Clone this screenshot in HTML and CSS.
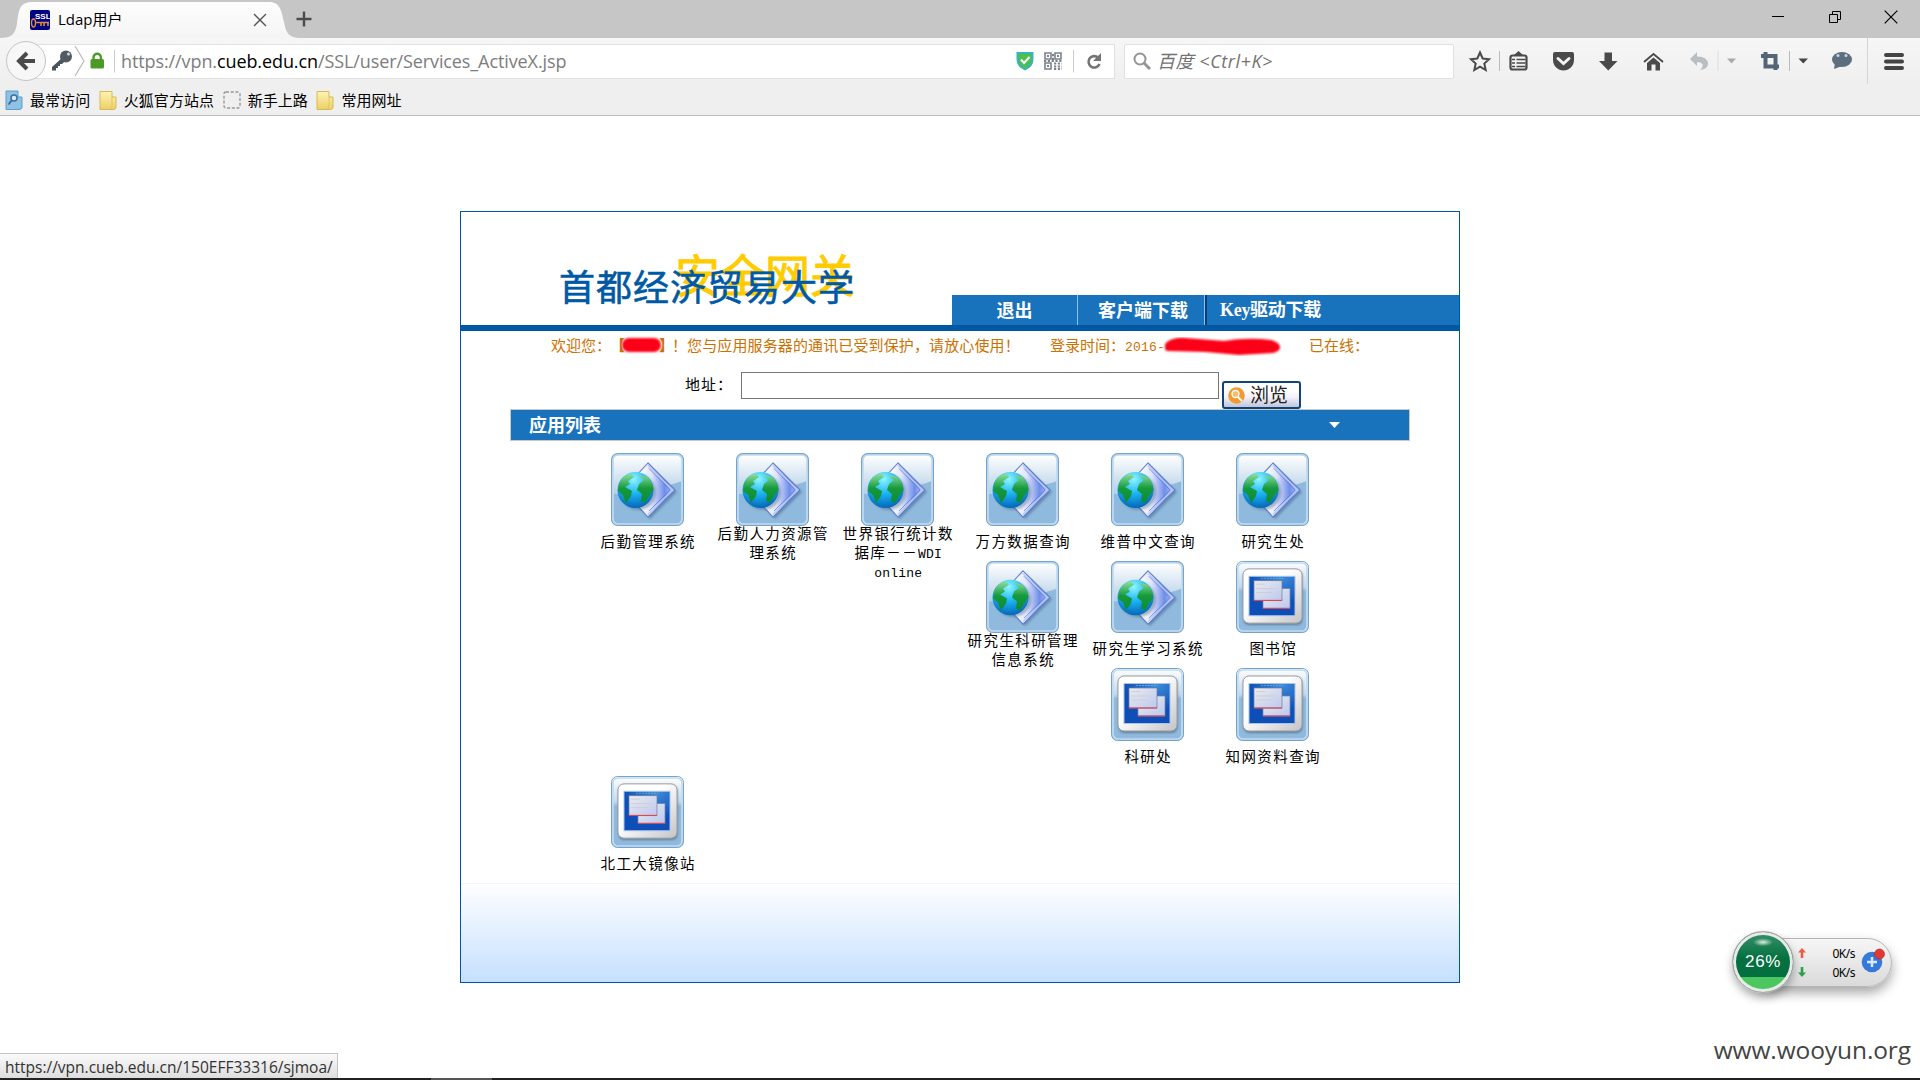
FILE: index.html
```html
<!DOCTYPE html>
<html lang="zh-CN">
<head>
<meta charset="utf-8">
<title>Ldap用户</title>
<link rel="stylesheet" href="styles.css">
</head>
<body>
<svg class="defs" width="0" height="0">
  <defs>
    <linearGradient id="tile" x1="0" y1="0" x2="0" y2="1"><stop offset="0" stop-color="#fff"/><stop offset=".36" stop-color="#c3d9ec"/><stop offset=".42" stop-color="#8fb9dd"/><stop offset="1" stop-color="#8fb9dd"/></linearGradient>
    <linearGradient id="gloss" x1="0" y1="0" x2="0" y2="1"><stop offset="0" stop-color="#fff"/><stop offset="1" stop-color="#b4cfe6"/></linearGradient>
    <radialGradient id="globe" cx=".45" cy=".2" r=".8"><stop offset="0" stop-color="#8ff6ff"/><stop offset=".5" stop-color="#1cb4f4"/><stop offset="1" stop-color="#0467b8"/></radialGradient>
    <linearGradient id="land" x1="0" y1="0" x2="0" y2="1"><stop offset="0" stop-color="#8fe0a0"/><stop offset=".5" stop-color="#169a3c"/><stop offset="1" stop-color="#0b8a35"/></linearGradient>
    <linearGradient id="dia" x1="0" y1="0" x2="1" y2="0"><stop offset=".3" stop-color="#fff"/><stop offset=".55" stop-color="#dfe5fb"/><stop offset=".8" stop-color="#6f8ee8"/><stop offset="1" stop-color="#c3d0fa"/></linearGradient>
    <linearGradient id="frame" x1="0" y1="0" x2="1" y2="1"><stop offset=".4" stop-color="#fff"/><stop offset="1" stop-color="#c4c4c8"/></linearGradient>
    <radialGradient id="screen" cx=".7" cy="0" r="1"><stop offset="0" stop-color="#3f8fdc"/><stop offset=".7" stop-color="#0d4fb6"/></radialGradient>
    <linearGradient id="win" x1="0" y1="0" x2="1" y2="1"><stop offset="0" stop-color="#ebebf0"/><stop offset="1" stop-color="#bcc8ee"/></linearGradient>
    <linearGradient id="folder" x1="0" y1="0" x2="0" y2="1"><stop offset="0" stop-color="#fdf3b4"/><stop offset="1" stop-color="#ecd066"/></linearGradient>
    <filter id="soft" x="-10%" y="-30%" width="120%" height="160%"><feGaussianBlur stdDeviation="1"/></filter>
    <symbol id="web" viewBox="0 0 73 73" preserveAspectRatio="none">
      <rect x=".5" y=".5" width="72" height="72" rx="6" fill="#8fb9dd" stroke="#73a3cb"/>
      <path d="M2 41C24 42 55 34 71 28V8q0-6-6-6H8Q2 2 2 8Z" fill="url(#gloss)"/>
      <rect x="2" y="2" width="69" height="69" rx="5" fill="none" stroke="#c3dbef" stroke-width="1.7"/>
      <path d="M39 13L66 39 39 66 14 40Z" fill="#41608a" opacity=".5" filter="url(#soft)"/>
      <path d="M37 10L64 37 37 64 12 37Z" fill="url(#dia)" stroke="#5f80c8" stroke-width="1.1"/>
      <path d="M37 12.500L61.500 37 37 61.500" fill="none" stroke="#b9c8fb" stroke-width="1.300"/>
      <path d="M38 15.500L59 37 38 58" fill="none" stroke="#5f7edb" stroke-width=".8"/>
      <circle cx="27" cy="39" r="18" fill="#405a7c" opacity=".4" filter="url(#soft)"/>
      <circle cx="24.500" cy="37" r="18" fill="url(#globe)"/>
      <path d="M8 31Q11 22 20 20.500L23 24 17 28 19 31 14 34 21 38 20 43 15 50 12 42 7 38ZM27 22L37 24Q42 30 42.500 37L38 43 34 50 30 48 31 41 26 37 28 31 33 27Z" fill="url(#land)"/>
    </symbol>
    <symbol id="app" viewBox="0 0 73 73" preserveAspectRatio="none">
      <rect x=".5" y=".5" width="72" height="72" rx="6" fill="url(#tile)" stroke="#73a3cb"/>
      <rect x="2" y="2" width="69" height="69" rx="5" fill="none" stroke="#c3dbef" stroke-width="1.7"/>
      <rect x="7.500" y="9" width="59" height="56" rx="6" fill="#51687d" opacity=".7" filter="url(#soft)"/>
      <rect x="7" y="8" width="59" height="55" rx="6" fill="url(#frame)" stroke="#9b9da1"/>
      <rect x="13" y="15.500" width="46" height="40" fill="url(#screen)" stroke="#a9c3ea"/>
      <path d="M25 17.500h22" stroke="#7bbbe0" stroke-dasharray="2 1" opacity=".6"/>
      <rect x="27" y="28" width="27" height="20" fill="url(#win)" stroke="#7484b4" stroke-width=".7"/>
      <path d="M27 48h27" stroke="#d04a5c" stroke-width="1.200"/>
      <rect x="18" y="20" width="28" height="20" fill="url(#win)" stroke="#6f7c9c" stroke-width=".7"/>
      <path d="M20 23.500h9M20 28h20M20 32h17" stroke="#cfcfd3"/>
      <path d="M18 40h28" stroke="#d84a55" stroke-width="1.200"/>
    </symbol>
    <symbol id="fold" viewBox="0 0 18 20"><path d="M1 1.500h12v5.500h4v11q-1 1.500-3 1.500H1Z" fill="url(#folder)" stroke="#d8b953"/><path d="M13 7v9q0 3-3 3" fill="none" stroke="#e2c663"/></symbol>
  </defs>
</svg>

<header class="tabstrip">
  <div class="tab">
    <svg class="tab-shape" width="300" height="36" viewBox="0 0 300 36"><defs><linearGradient id="tg" x1="0" y1="0" x2="0" y2="1"><stop offset="0" stop-color="#fdfdfd"/><stop offset="1" stop-color="#f5f5f5"/></linearGradient></defs><path d="M0 36C12 36 15 32 17 22C19 6 20 0 33 0H268C280 0 281 7 284 20C286 31 289 36 300 36Z" fill="url(#tg)"/></svg>
    <svg class="favicon" width="20" height="20" viewBox="0 0 20 20"><rect width="20" height="20" rx="2" fill="#010080"/><text x="5" y="9" class="ssl">SSL</text><ellipse cx="3.500" cy="13" rx="2" ry="4" fill="none" stroke="#d98c3c" stroke-width="1.4"/><path d="M5 12.500H19M11 13v3M14 13v3M18 13v3" stroke="#d98c3c" stroke-width="1.600"/></svg>
    <span class="tab-title">Ldap用户</span>
    <svg class="tab-close" width="14" height="14" viewBox="0 0 14 14"><path d="M1 1L13 13M13 1L1 13" stroke="#555" stroke-width="1.400"/></svg>
  </div>
  <svg class="plus" width="16" height="16" viewBox="0 0 16 16"><path d="M8 0.500V15.500M.5 8H15.500" stroke="#4c4c4c" stroke-width="2.400"/></svg>
  <div class="winbtns">
    <svg width="12" height="12"><path d="M0 5.500H12" stroke="#000"/></svg>
    <svg width="12" height="12"><path d="M.5 3.500H8.500V11.500H.5ZM3.500 3.500V.5H11.500V8.500H8.500" fill="none" stroke="#000"/></svg>
    <svg width="14" height="14"><path d="M.7 .7L13.300 13.300M13.300 .7L.7 13.300" stroke="#000" stroke-width="1.200"/></svg>
  </div>
</header>

<nav class="toolbar">
  <div class="urlbar">
    <svg class="url-left" width="112" height="40" viewBox="0 0 112 40">
      <circle cx="20" cy="20" r="19.500" fill="#f7f7f7" stroke="#c4c4c4"/>
      <path d="M29 20H14M21 12L13 20L21 28" fill="none" stroke="#4a4a4a" stroke-width="4"/>
      <path d="M46 29.500V26L56 17L59 20L56 23H54V25H52V27H50V29.500Z" fill="#4b545c"/><circle cx="60" cy="15.500" r="6" fill="#515b64"/><circle cx="62.500" cy="13" r="1.500" fill="#d6dade"/>
      <path d="M69 5L78 20L69 35" fill="none" stroke="#b9b9b9" stroke-width="1.200"/>
      <path d="M87.500 19V16.500a3.700 3.700 0 0 1 7.400 0V19" fill="none" stroke="#4a9a25" stroke-width="2.400"/><rect x="84.500" y="18" width="13.500" height="9.500" rx="1.500" fill="#4a9a25"/>
      <path d="M108.500 9V31.500" stroke="#ccc"/>
    </svg>
    <span class="url">https://vpn.<b>cueb.edu.cn</b>/SSL/user/Services_ActiveX.jsp</span>
    <svg class="url-right" width="92" height="24" viewBox="0 0 92 24">
      <path d="M.5 3H17.500V10Q17.500 18 9 21.500Q.5 18 .5 10Z" fill="#3bb4b5"/><path d="M2.500 5H15.500V10Q15 16 9 19Q3 16 2.500 10Z" fill="#4cc04d"/><path d="M5 10.500L8 14L13.500 8" fill="none" stroke="#fff" stroke-width="2"/>
      <g fill="none" stroke="#7b828d" stroke-width="1.600"><path d="M29 4h6v6h-6zM39 4h6v6h-6zM29 14h6v6h-6z"/><path d="M32 6v2M42 6v2M32 16v2" stroke-width="2"/><path d="M37 5v8M28 12h18M38 14.500h8M38 17.500h8M38 20h8" stroke-dasharray="2.200 1.600" stroke-width="2"/></g>
      <path d="M57.500 0.500V23.500" stroke="#ccc"/>
      <path d="M82 8.500A5.700 5.700 0 1 0 83.500 15" fill="none" stroke="#747474" stroke-width="2.600"/><path d="M85 4V12H77Z" fill="#747474"/>
    </svg>
  </div>
  <div class="search">
    <svg width="18" height="18" viewBox="0 0 18 18"><circle cx="7" cy="7" r="5.500" fill="none" stroke="#949494" stroke-width="2"/><path d="M11 11L17 17" stroke="#949494" stroke-width="3"/></svg>
    <span>百度 &lt;Ctrl+K&gt;</span>
  </div>
  <svg class="tools" width="454" height="46" viewBox="1466 38 454 46">
    <path d="M1480 52.500L1482.700 58.500L1489 59.200L1484.300 63.500L1485.700 70L1480 66.700L1474.300 70L1475.700 63.500L1471 59.200L1477.300 58.500Z" fill="none" stroke="#4a4a4a" stroke-width="2"/>
    <path d="M1499.500 51V71M1789.500 51V71" stroke="#bbb"/><path d="M1718 51V71" stroke="#ddd"/>
    <rect x="1510.500" y="55.500" width="16" height="14" rx="2" fill="none" stroke="#4a4a4a" stroke-width="2.200"/><path d="M1514 55L1518.500 51L1523 55Z" fill="#4a4a4a"/><path d="M1512 59.500h3m1.500 0h9M1512 63h3m1.500 0h9M1512 66.500h3m1.500 0h9" stroke="#4a4a4a" stroke-width="1.500"/>
    <path d="M1555 52H1572Q1574 52 1574 54V60C1574 66 1569 70.500 1563.500 70.500S1553 66 1553 60V54Q1553 52 1555 52Z" fill="#4a4a4a"/><path d="M1558 58.500L1563.500 63.500L1569 58.500" fill="none" stroke="#f4f4f4" stroke-width="3" stroke-linecap="round"/>
    <path d="M1604.500 52.500H1612V61H1617.500L1608.300 70.500L1599 61H1604.500Z" fill="#4a4a4a"/>
    <path d="M1644 62L1653.500 54L1663 62" fill="none" stroke="#4a4a4a" stroke-width="1.800"/><path d="M1647 63L1653.500 57.500L1660 63V70.500H1655.500V64.500H1651.500V70.500H1647Z" fill="#4a4a4a"/>
    <path d="M1690 59L1697 52V56.500Q1708 56.500 1708 64Q1708 69 1700 70Q1703.500 67 1702.500 64Q1701 62 1697 62V66Z" fill="#b9bec3"/>
    <path d="M1727 58.500H1736L1731.500 63.500Z" fill="#aaa"/><path d="M1798.500 58.500H1808L1803.300 63.500Z" fill="#444"/>
    <path d="M1761 56H1775.500V70M1765.500 52V66.500H1779" fill="none" stroke="#536476" stroke-width="4"/>
    <ellipse cx="1842" cy="59.500" rx="10" ry="7.500" fill="#5d6f7f"/><path d="M1835 63L1834 69L1842 66Z" fill="#5d6f7f"/><circle cx="1838" cy="55.500" r="1.500" fill="#ccd5dc"/><circle cx="1846" cy="55.500" r="1.500" fill="#ccd5dc"/>
    <path d="M1867.500 38V84" stroke="#d5d5d5"/>
    <path d="M1886 55H1902M1886 61.500H1902M1886 68H1902" stroke="#444" stroke-width="4" stroke-linecap="round"/>
  </svg>
</nav>
<div class="bookmarks">
  <span class="bm"><svg width="18" height="20" viewBox="0 0 18 20"><path d="M1 1h12v6h4v11q-1 1.500-3 1.500H1Z" fill="#8fc1e3" stroke="#5c9fcb"/><circle cx="9" cy="8" r="3" fill="#d6ebf8" stroke="#3a6f9c" stroke-width="1.500"/><path d="M7 10L3.500 14.500" stroke="#3a6f9c" stroke-width="2"/></svg><span>最常访问</span></span>
  <span class="bm"><svg width="18" height="20"><use href="#fold"/></svg><span>火狐官方站点</span></span>
  <span class="bm"><svg width="18" height="20"><rect x="1" y="2" width="16" height="16" rx="2" fill="none" stroke="#999" stroke-width="1.400" stroke-dasharray="3 1.700"/></svg><span>新手上路</span></span>
  <span class="bm"><svg width="18" height="20"><use href="#fold"/></svg><span>常用网址</span></span>
</div>

<main class="page">
  <section class="panel">
    <div class="banner">
      <div class="logo"><span class="gateway">安全网关</span><span class="school">首都经济贸易大学</span></div>
      <div class="menu"><a class="m1">退出</a><a class="m2">客户端下载</a><a class="m3">Key驱动下载</a></div>
    </div>
    <div class="welcome">
      <span class="hello">欢迎您：</span>
      <span class="user"><b>【</b><b>】</b><svg class="mark" width="46" height="20"><rect x="4" y="3" width="39" height="14" rx="7" fill="#fb0015" filter="url(#soft)"/></svg></span>
      <span class="safe">！您与应用服务器的通讯已受到保护，请放心使用！</span>
      <span class="login">登录时间：<i>2016-</i><svg class="mark mark-date" width="130" height="24"><path d="M12 11Q18 6 30 7L68 10Q92 6 115 9Q126 13 117 16L83 18 50 15 12 14Z" fill="#fb0015" stroke="#fb0015" stroke-width="6" stroke-linejoin="round" filter="url(#soft)"/></svg></span>
      <span class="online">已在线：</span>
    </div>
    <form class="address">
      <label for="addr">地址：</label>
      <input id="addr" type="text">
      <button type="button"><svg width="17" height="17" viewBox="0 0 17 17"><circle cx="8.500" cy="8.500" r="8.300" fill="#f29a2e"/><circle cx="7.500" cy="7" r="3.500" fill="#f7bb70" stroke="#fff" stroke-width="1.300"/><path d="M10 10L14 14" stroke="#fff" stroke-width="2"/></svg><span>浏览</span></button>
    </form>
    <div class="list-head"><span>应用列表</span><svg width="11" height="6"><path d="M0 0H11L5.500 6Z" fill="#fff"/></svg></div>
    <div class="apps">
      <a class="app c1 r1"><svg><use href="#web"/></svg><span>后勤管理系统</span></a>
      <a class="app c2 r1 long"><svg><use href="#web"/></svg><span>后勤人力资源管<br>理系统</span></a>
      <a class="app c3 r1 long"><svg><use href="#web"/></svg><span>世界银行统计数<br>据库－－<i>WDI</i><br><i>online</i></span></a>
      <a class="app c4 r1"><svg><use href="#web"/></svg><span>万方数据查询</span></a>
      <a class="app c5 r1"><svg><use href="#web"/></svg><span>维普中文查询</span></a>
      <a class="app c6 r1"><svg><use href="#web"/></svg><span>研究生处</span></a>
      <a class="app c4 r2 long"><svg><use href="#web"/></svg><span>研究生科研管理<br>信息系统</span></a>
      <a class="app c5 r2"><svg><use href="#web"/></svg><span>研究生学习系统</span></a>
      <a class="app c6 r2"><svg><use href="#app"/></svg><span>图书馆</span></a>
      <a class="app c5 r3"><svg><use href="#app"/></svg><span>科研处</span></a>
      <a class="app c6 r3"><svg><use href="#app"/></svg><span>知网资料查询</span></a>
      <a class="app c1 r4"><svg><use href="#app"/></svg><span>北工大镜像站</span></a>
    </div>
    <div class="fade"></div>
  </section>
</main>

<div class="status">https://vpn.cueb.edu.cn/150EFF33316/sjmoa/</div>
<aside class="meter">
  <div class="ball"><span>26%</span></div>
  <div class="speeds">
    <div><svg width="8" height="10"><path d="M4 0L8 4.500H5.300V10H2.700V4.500H0Z" fill="#ee5b42"/></svg><span>0K/s</span></div>
    <div><svg width="8" height="10"><path d="M4 10L8 5.500H5.300V0H2.700V5.500H0Z" fill="#2b9f50"/></svg><span>0K/s</span></div>
  </div>
  <svg class="boost" width="24" height="26"><circle cx="11" cy="14" r="10.300" fill="#3579dd"/><path d="M11 9V19M6 14H16" stroke="#dbe9ff" stroke-width="2.500"/><circle cx="18.500" cy="6" r="5" fill="#e13a35" stroke="#b92420" stroke-width=".6"/></svg>
</aside>
<div class="watermark">www.wooyun.org</div>
<div class="taskbar"></div>
</body>
</html>
```
FILE: styles.css
```css
* { box-sizing: border-box; }
body { margin: 0; height: 1080px; overflow: hidden; background: #fff; font-family: "Open Sans", "Noto Sans CJK SC", sans-serif; color: #000; display: flex; flex-direction: column; position: relative; }
svg { display: block; flex: none; }
.defs { position: absolute; }

.tabstrip { height: 38px; background: #c6c6c6; display: flex; align-items: flex-start; flex: none; }
.tab { position: relative; width: 300px; height: 38px; display: flex; align-items: center; padding: 2px 33px 0 30px; }
.tab-shape { position: absolute; left: 0; top: 2px; }
.favicon, .tab-title, .tab-close { position: relative; }
.ssl { font: bold 8px "Liberation Sans", sans-serif; fill: #fff; }
.tab-title { margin: -3px 0 0 8px; font-size: 15px; flex: 1; }
.plus { margin: 11px 0 0 -4px; }
.winbtns { margin-left: auto; height: 34px; display: flex; align-items: center; gap: 45px; padding-right: 22px; }
.winbtns svg:last-child { margin-left: -2px; }

.toolbar { height: 46px; flex: none; display: flex; align-items: center; background: linear-gradient(#f6f6f6, #efefef); padding-left: 6px; }
.urlbar { width: 1109px; height: 35px; display: flex; align-items: center; background: linear-gradient(#fff, #fff) 20px 1px / 1088px 33px no-repeat, linear-gradient(#e0e0e0, #e0e0e0) 20px 0 / 1089px 35px no-repeat; }
.url-left { margin: -3px 0; }
.url { margin: -1px 0 0 3px; font-size: 18px; letter-spacing: -.1px; color: #7d7d7d; white-space: nowrap; }
.url b { font-weight: 400; color: #000; }
.url-right { margin-left: auto; margin-right: 7px; }
.search { width: 330px; height: 35px; margin-left: 9px; border: 1px solid #e0e0e0; border-radius: 2px; background: #fff; display: flex; align-items: center; padding-left: 8px; gap: 6px; font-size: 18px; font-style: italic; letter-spacing: .55px; color: #737373; }
.search span { margin-top: -2px; }
.tools { margin-left: 12px; }

.bookmarks { height: 32px; flex: none; background: #efefef; border-bottom: 1px solid #bdbdbd; display: flex; align-items: center; gap: 8.500px; padding: 1px 0 0 5px; font: 15px "Noto Sans CJK SC", sans-serif; }
.bm { display: flex; align-items: center; gap: 7px; letter-spacing: .06px; }
.bm span { margin-top: -1px; }

.page { flex: 1; padding: 95px 0 0 460px; }
.panel { width: 1000px; height: 772px; border: 1px solid #0055a0; display: flex; flex-direction: column; font-family: "Noto Sans CJK SC", sans-serif; }
.banner { height: 119px; flex: none; border-bottom: 6px solid #0057a3; display: flex; justify-content: space-between; align-items: flex-end; }
.logo { display: grid; margin: 0 0 22px 98px; white-space: nowrap; align-items: end; }
.logo span { grid-area: 1 / 1; }
.gateway { color: #fc0; font-size: 45px; line-height: 45px; margin: 0 0 7px 116px; -webkit-text-stroke: 1px #fc0; }
.school { color: #0059a5; font-size: 36px; line-height: 36px; letter-spacing: 1px; z-index: 1; -webkit-text-stroke: .6px #0059a5; }
.menu { width: 507px; height: 30px; background: #1872bc; display: flex; color: #fff; font-weight: 700; font-size: 18px; line-height: 29px; }
.m1 { width: 126px; text-align: center; border-right: 1px solid #8cc0ee; }
.m2 { width: 127px; padding-left: 20px; border-right: 1px solid #8cc0ee; }
.m3 { border-left: 2px solid #003f78; padding-left: 13px; font-family: "Liberation Serif", "Noto Sans CJK SC", serif; letter-spacing: -.3px; line-height: 31px; }

.welcome { height: 41px; flex: none; display: flex; padding: 3px 0 0 90px; font-size: 15px; line-height: 22px; color: #cb7100; white-space: nowrap; }
.hello { width: 61px; }
.user { position: relative; width: 60px; display: flex; justify-content: space-between; }
.user b:first-child { margin-left: -2px; }
.user b:nth-child(2) { margin-right: -2px; }
.mark { position: absolute; left: 6px; top: 1px; }
.mark-date { left: 106px; top: 0; }
.safe { width: 378px; letter-spacing: .12px; }
.login { position: relative; width: 259px; }
.welcome i, .app i { font: 13px/1 "Liberation Mono", monospace; letter-spacing: .2px; }

.address { height: 37px; flex: none; display: flex; margin: 0; padding-left: 224px; font-size: 15px; }
.address label { width: 56px; letter-spacing: 1px; line-height: 23px; }
.address input { width: 478px; height: 27px; border: 1px solid #767676; background: #fff; padding: 0; }
.address button { margin: 9px 0 0 3px; width: 79px; height: 28px; border: 2px solid #0e4677; border-radius: 3px; background: linear-gradient(#fff 30%, #f1f1f8 60%, #c2c4dc); display: flex; align-items: center; gap: 5px; padding: 0 0 0 4px; font: 19px "Noto Sans CJK SC", sans-serif; color: #222; }
.address button span { margin-top: -3px; }

.list-head { width: 900px; height: 32px; flex: none; margin-left: 49px; border: 1px solid #c8c8c8; background: #1872bc; color: #fff; display: flex; align-items: center; justify-content: space-between; padding: 0 69px 1px 18px; font-size: 18px; font-weight: 700; }
.list-head span { margin-top: -1px; }

.apps { flex: none; height: 442px; padding: 12px 0 0 124px; display: grid; grid-template-columns: repeat(6, 125px); grid-template-rows: 108px 107px 108px 107px; }
.app { display: flex; flex-direction: column; align-items: center; font-size: 14.500px; line-height: 19px; letter-spacing: 1.400px; text-align: center; white-space: nowrap; }
.app svg { width: 73px; height: 73px; }
.app span { margin: 5px 0 0 1.500px; }
.app.long span { margin-top: -3px; }
.c1 { grid-column: 1; } .c2 { grid-column: 2; } .c3 { grid-column: 3; } .c4 { grid-column: 4; } .c5 { grid-column: 5; } .c6 { grid-column: 6; }
.r1 { grid-row: 1; } .r2 { grid-row: 2; } .r3 { grid-row: 3; } .r4 { grid-row: 4; }
.r2 svg, .r4 svg { height: 72px; }
.fade { flex: 1; border-top: 1px solid #f2f6fb; background: linear-gradient(#fefeff, #c5e0ff); }

.status { position: absolute; left: 0; bottom: 2px; width: 338px; height: 25px; border: 1px solid #c4c4c4; border-width: 1px 1px 0 0; background: linear-gradient(#fafafa, #dedede); padding-left: 5px; font-size: 15.500px; line-height: 27px; white-space: nowrap; color: #333; }
.taskbar { position: absolute; left: 0; bottom: 0; width: 100%; height: 2px; background: linear-gradient(#555, #555) 431px 0 / 61px 2px no-repeat #222; }
.meter { position: absolute; left: 1750px; top: 938px; width: 142px; height: 49px; border: 1px solid #b5b5b5; border-radius: 25px; background: linear-gradient(#f6f6f6, #dadada); box-shadow: 0 6px 12px rgba(0, 0, 0, .35); display: flex; align-items: center; }
.ball { flex: none; width: 62px; height: 62px; margin: -2px 0 0 -19px; border-radius: 50%; border: 1px solid #a9a9a9; box-shadow: inset 0 0 0 3px #e9e9e9, 0 5px 9px rgba(0, 0, 0, .3); background: radial-gradient(ellipse 10px 4px at 50% 17%, #d9eee4, transparent), linear-gradient(#2e8b62 8%, #04703f 45%, #04703f 75%, #4cc65f 75%); display: flex; align-items: center; justify-content: center; color: #fff; font: 17px "Liberation Sans", sans-serif; letter-spacing: .6px; }
.speeds { width: 57px; margin-left: 4px; display: flex; flex-direction: column; font: 12px/19px "Noto Sans", sans-serif; }
.speeds div { display: flex; align-items: center; justify-content: space-between; letter-spacing: -.5px; }
.boost { margin: -3px 0 0 6px; }
.watermark { position: absolute; right: 9px; bottom: 13px; font-size: 24.500px; line-height: 34px; letter-spacing: -.1px; color: #444; }
```
